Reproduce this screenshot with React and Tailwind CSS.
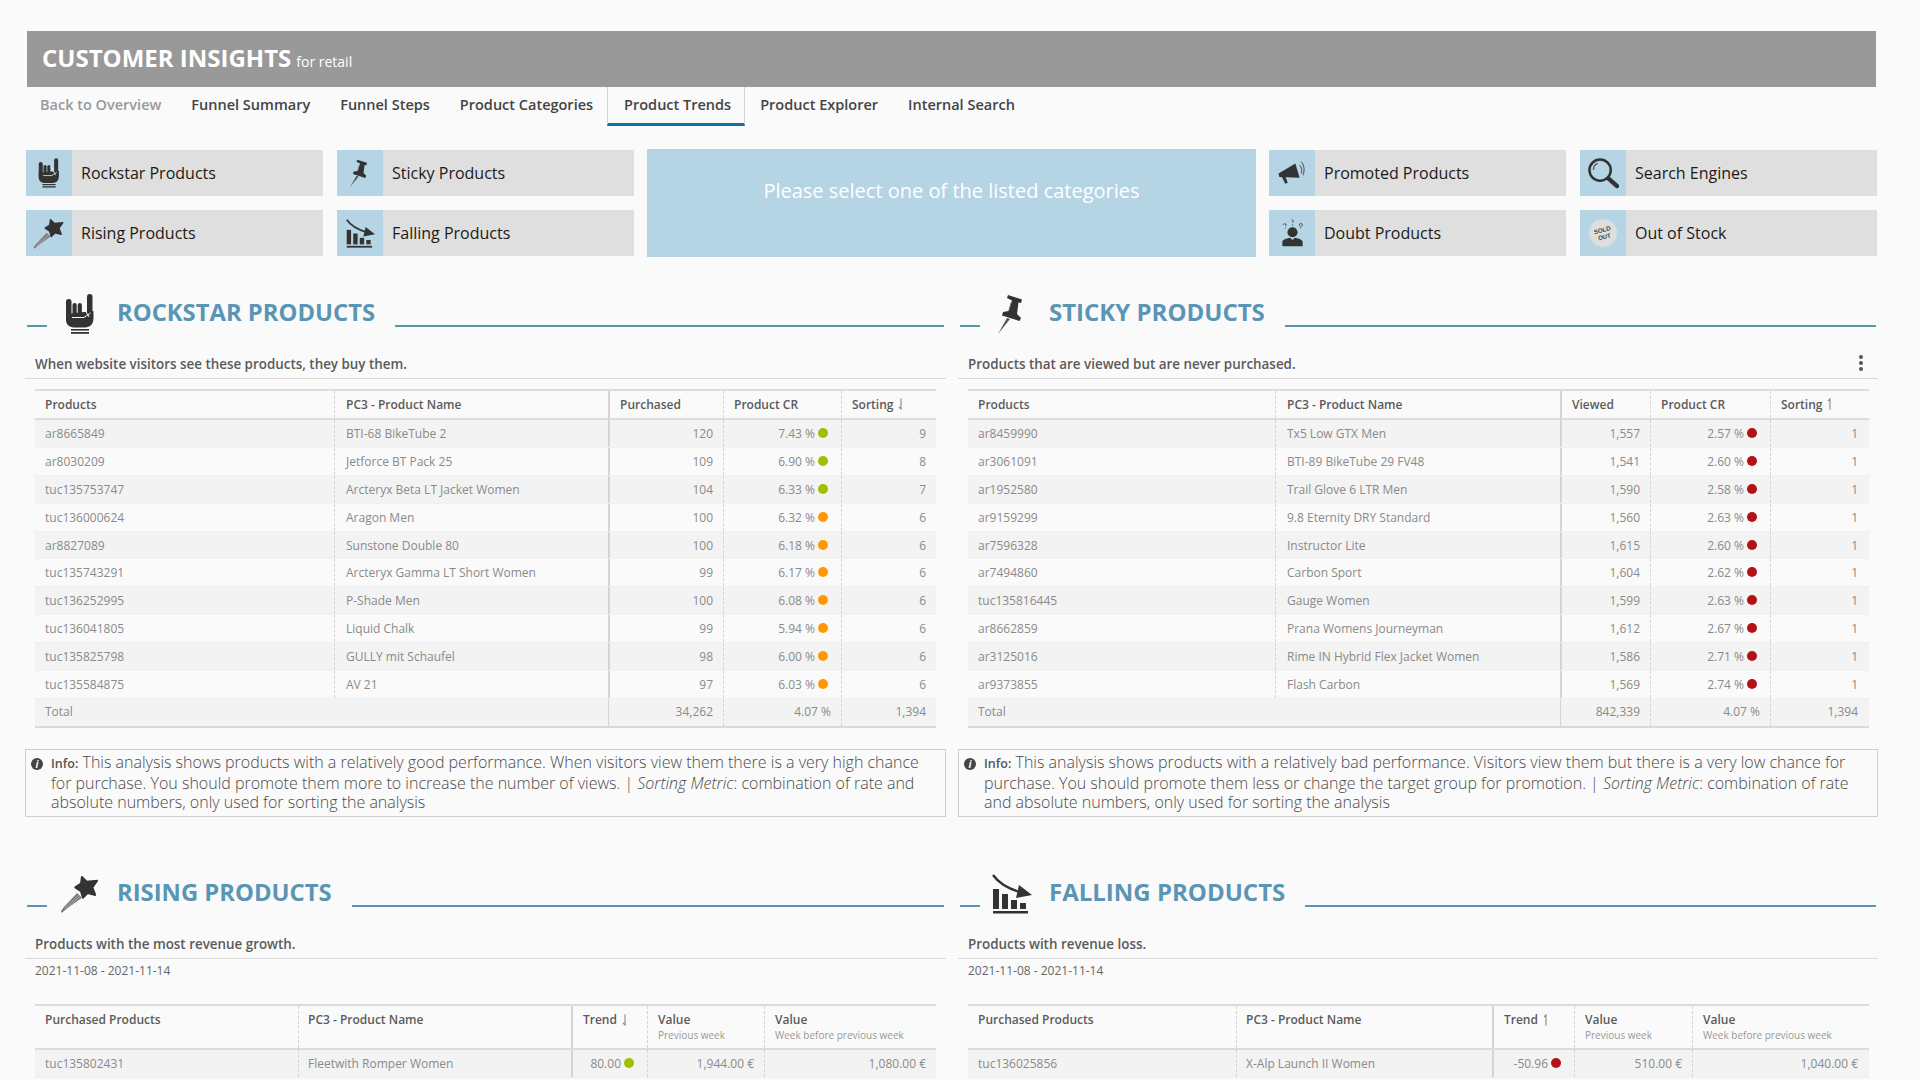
import React from 'react'

const font = { fontFamily: '"Open Sans", sans-serif' }

const RockIcon = ({ className }) => (
  <svg viewBox="0 0 30 40" className={className} fill="#333">
    <rect x="1" y="5" width="5.5" height="22" rx="2.7" />
    <rect x="22" y="0" width="5.5" height="26" rx="2.7" />
    <rect x="7.5" y="9" width="4.2" height="16" rx="2.1" />
    <rect x="12.7" y="9" width="4.2" height="16" rx="2.1" />
    <path d="M1 20 L28.5 17 L28.5 24 C28.5 30 25 33.5 20 33.5 L10 33.5 C5 33.5 1 31 1 26 Z" />
    <path d="M7 23.5 L19 23.5 L25.5 19 M17.5 11 L24 23" stroke="#fafafa" strokeWidth="1" fill="none" />
    <rect x="6" y="35" width="18" height="1.6" />
    <rect x="6" y="38" width="18" height="1.8" />
  </svg>
)

const PinIcon = ({ className }) => (
  <svg viewBox="0 0 30 40" className={className}>
    <path d="M11 1 L25 5.5 L24 9 L21.5 8.5 L20 20 L24 24 L22.5 27 L5 21.5 L6 18 L11.5 17 L15 6.5 L10 4 Z" fill="#333" />
    <path d="M10 24 L13 25 L1 40 Z" fill="#555" />
    <path d="M14 9 L12 16" stroke="#777" strokeWidth="1" />
  </svg>
)

const WandIcon = ({ className }) => (
  <svg viewBox="0 0 42 40" className={className}>
    <path d="M23 2 L28 7 L39 6 L34 13 L37 21 L29 19 L24 24 L22 17 L16 13 L22 9 Z" fill="#333" stroke="#333" strokeWidth="2" strokeLinejoin="round" />
    <path d="M18 19 L23 24 L5 37 L2 40 L1 38 L4 34 Z" fill="#777" />
    <path d="M19.5 21 L5 35.5 M21 22.5 L6 36.5" stroke="#ccc" strokeWidth="0.7" />
  </svg>
)

const FallingIcon = ({ className }) => (
  <svg viewBox="0 0 40 40" className={className}>
    <path d="M1 1 C6 8 14 14 28 18" stroke="#333" strokeWidth="2.4" fill="none" />
    <path d="M27 11 L40 21 L24 24 Z" fill="#333" />
    <rect x="1" y="15" width="6" height="20" fill="#333" />
    <rect x="10" y="20" width="6" height="15" fill="#333" />
    <rect x="19" y="26" width="6" height="9" fill="#333" />
    <rect x="28" y="29" width="6" height="6" fill="#333" />
    <rect x="1" y="37" width="35" height="2.5" fill="#333" />
  </svg>
)

const MegaphoneIcon = ({ className }) => (
  <svg viewBox="0 0 32 32" className={className}>
    <path d="M20 4 L25 21 L1 20 L0 16 Z" fill="#333" />
    <path d="M4 20 L8 19 L11 27 L8 28 Z" fill="#333" />
    <path d="M25 6 C28 9 28 13 27 16 M27 2 C31 7 31 13 29 18" stroke="#333" strokeWidth="1" fill="none" />
  </svg>
)

const SearchIcon = ({ className }) => (
  <svg viewBox="0 0 32 32" className={className}>
    <circle cx="12.5" cy="12.5" r="11" fill="none" stroke="#333" strokeWidth="2.6" />
    <path d="M5.5 12 C5.5 8.5 8 6 10 5.5" fill="none" stroke="#555" strokeWidth="1.4" />
    <path d="M21 21 L30 29" stroke="#333" strokeWidth="4.4" strokeLinecap="round" />
  </svg>
)

const DoubtIcon = ({ className }) => (
  <svg viewBox="0 0 32 36" className={className}>
    <circle cx="16" cy="17" r="6.5" fill="#333" />
    <path d="M3 35 L3 29 C5 25 10 25 13 24 L16 27 L19 24 C22 25 27 25 29 29 L29 35 Z" fill="#333" />
    <path d="M15 1.5 C18 1 18 4 15.5 4.5 M16 7 L16 8.5 M4 7.5 C5 5 9 6 7 9 M7 11 L7 12 M25 9 C24 5 29 5 28.5 8 C28 10 26 10 26 12" stroke="#333" strokeWidth="1.1" fill="none" />
  </svg>
)

const burst = Array.from({ length: 48 }, (_, i) => {
  const r = i % 2 ? 15.8 : 14.2
  const a = (i / 48) * Math.PI * 2
  return `${16 + r * Math.cos(a)},${16 + r * Math.sin(a)}`
}).join(' ')

const SoldOutIcon = ({ className }) => (
  <svg viewBox="0 0 32 32" className={className}>
    <polygon points={burst} fill="#dedede" />
    <g transform="rotate(-14 16 16)" fill="#444" fontFamily="Liberation Sans, sans-serif" fontWeight="700" fontSize="6.5" textAnchor="middle">
      <text x="16" y="15">SOLD</text>
      <text x="16.5" y="22.5">OUT</text>
    </g>
  </svg>
)

const CategoryButton = ({ icon: Icon, iconClass, label }) => (
  <div className="flex h-[46px] w-[297px] bg-[#e0dfdf]">
    <div className="flex w-[46px] shrink-0 items-center justify-center bg-[#b5d4e4]">
      <Icon className={iconClass} />
    </div>
    <span className="ml-[9px] self-center text-[16px] text-[#1a1a1a]">{label}</span>
  </div>
)

const Dot = ({ color }) => <span className={`ml-[3px] inline-block h-[10px] w-[10px] -translate-y-[1px] rounded-full ${color}`} />

const green = 'bg-[#9dc000]'
const orange = 'bg-[#ff9800]'
const red = 'bg-[#b31217]'

const SortArrow = ({ up }) => (
  <svg viewBox="0 0 8 12" className="ml-[4px] inline-block h-[12px] w-[8px] -translate-y-[1px]" fill="none" stroke="#888" strokeWidth="1.1">
    {up ? <path d="M4 11.5 L4 1 L2 3" /> : <path d="M4 .5 L4 11 L2 9" />}
  </svg>
)

const dashed = 'border-l border-dashed border-[#d4d4d4]'
const solid = 'border-l-2 border-[#d4d4d4]'

const Row = ({ cols, cells, striped, dots, trend, height = 'h-[27.9px]' }) => (
  <div className={`grid ${cols} ${height} items-stretch border-b border-[#f0f0f0] text-[12px] text-[#8a8a8a] ${striped ? 'bg-[#f3f3f3]' : ''}`}>
    <div className="flex items-center pt-[1px] pl-[10px]">{cells[0]}</div>
    <div className={`flex items-center pt-[1px] ${trend ? 'pl-[9px]' : 'pl-[11px]'} ${dashed}`}>{cells[1]}</div>
    <div className={`flex items-center justify-end pt-[1px] ${trend ? 'pr-[13px]' : 'pr-[10px]'} ${solid}`}>{cells[2]}</div>
    <div className={`flex items-center justify-end pt-[1px] ${dots ? 'pr-[13px]' : 'pr-[10px]'} ${dashed}`}>{cells[3]}</div>
    <div className={`flex items-center justify-end pt-[1px] pr-[10px] ${dashed}`}>{cells[4]}</div>
  </div>
)

const TotalRow = ({ cols, cells }) => (
  <div className={`grid ${cols} h-[29px] items-stretch border-b-2 border-[#d9d9d9] bg-[#f3f3f3] text-[12px] text-[#8a8a8a]`}>
    <div className="col-span-2 flex items-center pl-[10px]">Total</div>
    <div className="flex items-center justify-end border-l border-[#d4d4d4] pr-[10px]">{cells[0]}</div>
    <div className={`flex items-center justify-end pr-[10px] ${dashed}`}>{cells[1]}</div>
    <div className={`flex items-center justify-end pr-[10px] ${dashed}`}>{cells[2]}</div>
  </div>
)

const HeaderRow = ({ cols, heads, height, tall }) => (
  <div className={`grid ${cols} ${height} border-t-2 border-b-2 border-[#dcdcdc] text-[12px] font-semibold text-[#5a5a5a]`}>
    {heads.map((head, i) => (
      <div
        key={i}
        className={`${tall ? 'pt-[5px]' : 'flex items-center'} ${i === 0 ? 'pl-[10px]' : i === 1 ? `${tall ? 'pl-[9px]' : 'pl-[11px]'} ${dashed}` : i === 2 ? `pl-[10px] ${solid}` : `pl-[10px] ${dashed}`}`}
      >
        <div>
          {head.label}
          {head.sort && <SortArrow up={head.sort === 'up'} />}
        </div>
        {head.sub && <div className="-mt-[1px] text-[10px] font-normal text-[#999]">{head.sub}</div>}
      </div>
    ))}
  </div>
)

const SectionTitle = ({ icon: Icon, iconClass, iconWrap, title, size = 'text-[23.8px]' }) => (
  <div className="flex h-[40px] items-end pl-[2px]">
    <div className="mb-[7px] h-[2px] w-[20px] shrink-0 bg-[#5b95b5]" />
    <div className={iconWrap}>
      <Icon className={iconClass} />
    </div>
    <h2 className={`mb-[6px] ${size} leading-[32px] font-bold whitespace-nowrap text-[#5b95b5]`}>{title}</h2>
    <div className="mr-[2px] mb-[7px] ml-[20px] h-[2px] flex-1 bg-[#5b95b5]" />
  </div>
)

const Description = ({ children, menu }) => (
  <div className="flex h-[45px] items-center justify-between border-b border-[#d9d9d9] pt-[16px] pl-[10px] text-[13.4px] font-semibold text-[#5a5a5a]">
    <span>{children}</span>
    {menu && (
      <span className="mr-[15px] flex -translate-y-[1px] flex-col gap-[2px]">
        <i className="h-[4px] w-[4px] rounded-full bg-[#555]" />
        <i className="h-[4px] w-[4px] rounded-full bg-[#555]" />
        <i className="h-[4px] w-[4px] rounded-full bg-[#555]" />
      </span>
    )}
  </div>
)

const Info = ({ children }) => (
  <div className="relative mt-[21px] h-[68px] border border-[#cfcfcf] pt-[3px] pr-[24px] pl-[25px] text-[16px] leading-[19.6px] font-light text-[#4a4a4a]">
    <span className="absolute top-[8px] left-[5px] flex h-[12px] w-[12px] items-center justify-center rounded-full bg-[#444] text-[10px] leading-none font-bold text-[#fafafa] italic">i</span>
    <span className="text-[12.5px] font-semibold text-[#555]">Info:</span>{' '}
    {children}
  </div>
)

const rockstarRows = [
  ['ar8665849', 'BTI-68 BikeTube 2', '120', '7.43 %', green, '9'],
  ['ar8030209', 'Jetforce BT Pack 25', '109', '6.90 %', green, '8'],
  ['tuc135753747', 'Arcteryx Beta LT Jacket Women', '104', '6.33 %', green, '7'],
  ['tuc136000624', 'Aragon Men', '100', '6.32 %', orange, '6'],
  ['ar8827089', 'Sunstone Double 80', '100', '6.18 %', orange, '6'],
  ['tuc135743291', 'Arcteryx Gamma LT Short Women', '99', '6.17 %', orange, '6'],
  ['tuc136252995', 'P-Shade Men', '100', '6.08 %', orange, '6'],
  ['tuc136041805', 'Liquid Chalk', '99', '5.94 %', orange, '6'],
  ['tuc135825798', 'GULLY mit Schaufel', '98', '6.00 %', orange, '6'],
  ['tuc135584875', 'AV 21', '97', '6.03 %', orange, '6'],
]

const stickyRows = [
  ['ar8459990', 'Tx5 Low GTX Men', '1,557', '2.57 %', red, '1'],
  ['ar3061091', 'BTI-89 BikeTube 29 FV48', '1,541', '2.60 %', red, '1'],
  ['ar1952580', 'Trail Glove 6 LTR Men', '1,590', '2.58 %', red, '1'],
  ['ar9159299', '9.8 Eternity DRY Standard', '1,560', '2.63 %', red, '1'],
  ['ar7596328', 'Instructor Lite', '1,615', '2.60 %', red, '1'],
  ['ar7494860', 'Carbon Sport', '1,604', '2.62 %', red, '1'],
  ['tuc135816445', 'Gauge Women', '1,599', '2.63 %', red, '1'],
  ['ar8662859', 'Prana Womens Journeyman', '1,612', '2.67 %', red, '1'],
  ['ar3125016', 'Rime IN Hybrid Flex Jacket Women', '1,586', '2.71 %', red, '1'],
  ['ar9373855', 'Flash Carbon', '1,569', '2.74 %', red, '1'],
]

const ProductTable = ({ cols, heads, rows, total }) => (
  <div className="mt-[10px] ml-[10px] w-[901px]">
    <HeaderRow cols={cols} heads={heads} height="h-[31px]" />
    {rows.map((row, i) => (
      <Row
        key={row[0]}
        cols={cols}
        striped={i % 2 === 0}
        dots
        cells={[row[0], row[1], row[2], <>{row[3]}<Dot color={row[4]} /></>, row[5]]}
      />
    ))}
    <TotalRow cols={cols} cells={total} />
  </div>
)

const TrendTable = ({ cols, sort, row }) => (
  <div className="ml-[10px] w-[901px]">
    <HeaderRow
      cols={cols}
      tall
      height="h-[46px]"
      heads={[
        { label: 'Purchased Products' },
        { label: 'PC3 - Product Name' },
        { label: 'Trend', sort },
        { label: 'Value', sub: 'Previous week' },
        { label: 'Value', sub: 'Week before previous week' },
      ]}
    />
    <Row
      cols={cols}
      striped
      trend
      height="h-[28px]"
      cells={[row[0], row[1], <>{row[2]}<Dot color={row[3]} /></>, row[4], row[5]]}
    />
  </div>
)

const DateRange = () => <div className="h-[45px] pt-[4px] pl-[10px] text-[12px] leading-[16px] text-[#666]">2021-11-08 - 2021-11-14</div>

const navItems = ['Funnel Summary', 'Funnel Steps', 'Product Categories']
const navAfter = ['Product Explorer', 'Internal Search']

export default function App() {
  return (
    <div className="h-screen overflow-hidden bg-[#fafafa] pt-[31px]" style={font}>
      <div className="ml-[27px] flex h-[56px] w-[1849px] items-center bg-[#999999] pb-[2px] pl-[15px] text-white">
        <span className="text-[24px] font-bold">CUSTOMER INSIGHTS</span>
        <span className="mt-[7px] ml-[5px] text-[14px]">for retail</span>
      </div>

      <nav className="ml-[25px] flex h-[39px] items-stretch text-[14.5px] font-semibold text-[#444]">
        <div className="flex items-center border-b-[3px] border-transparent px-[15px] text-[#999]">Back to Overview</div>
        {navItems.map((item) => (
          <div key={item} className="flex items-center border-b-[3px] border-transparent px-[15px]">{item}</div>
        ))}
        <div className="-ml-[1px] flex items-center border-x border-b-[3px] border-x-[#d4d4d4] border-b-[#0b72ad] pr-[13px] pl-[16px]">Product Trends</div>
        {navAfter.map((item) => (
          <div key={item} className="flex items-center border-b-[3px] border-transparent px-[15px]">{item}</div>
        ))}
      </nav>

      <div className="mt-[23px] ml-[26px] flex h-[108px] items-center">
        <div className="grid grid-cols-[297px_297px] gap-x-[14px] gap-y-[14px]">
          <CategoryButton icon={RockIcon} iconClass="h-[30px] w-[22px]" label="Rockstar Products" />
          <CategoryButton icon={PinIcon} iconClass="h-[28px] w-[22px]" label="Sticky Products" />
          <CategoryButton icon={WandIcon} iconClass="h-[31px] w-[32px]" label="Rising Products" />
          <CategoryButton icon={FallingIcon} iconClass="h-[29px] w-[29px]" label="Falling Products" />
        </div>
        <div className="mx-[13px] flex h-[108px] w-[609px] justify-center bg-[#b5d4e4] pt-[27px] text-[20px] text-white">
          Please select one of the listed categories
        </div>
        <div className="grid grid-cols-[297px_297px] gap-x-[14px] gap-y-[14px]">
          <CategoryButton icon={MegaphoneIcon} iconClass="h-[27px] w-[28px]" label="Promoted Products" />
          <CategoryButton icon={SearchIcon} iconClass="h-[31px] w-[31px]" label="Search Engines" />
          <CategoryButton icon={DoubtIcon} iconClass="h-[30px] w-[25px]" label="Doubt Products" />
          <CategoryButton icon={SoldOutIcon} iconClass="h-[30px] w-[30px]" label="Out of Stock" />
        </div>
      </div>

      <div className="mt-[37px] ml-[25px] grid grid-cols-[921px_920px] gap-x-[12px]">
        <section>
          <SectionTitle icon={RockIcon} iconWrap="mr-[22px] ml-[18px] w-[30px]" iconClass="h-[40px] w-[30px]" title="ROCKSTAR PRODUCTS" />
          <Description>When website visitors see these products, they buy them.</Description>
          <ProductTable
            cols="grid-cols-[299px_274px_115px_118px_95px]"
            heads={[
              { label: 'Products' },
              { label: 'PC3 - Product Name' },
              { label: 'Purchased' },
              { label: 'Product CR' },
              { label: 'Sorting', sort: 'down' },
            ]}
            rows={rockstarRows}
            total={['34,262', '4.07 %', '1,394']}
          />
          <Info>
            This analysis shows products with a relatively good performance. When visitors view them there is a very high chance for purchase. You should promote them more to increase the number of views. | <em>Sorting Metric</em>: combination of rate and absolute numbers, only used for sorting the analysis
          </Info>
        </section>

        <section>
          <SectionTitle icon={PinIcon} size="text-[24px]" iconWrap="mr-[22px] ml-[17px] w-[30px]" iconClass="h-[40px] w-[30px]" title="STICKY PRODUCTS" />
          <Description menu>Products that are viewed but are never purchased.</Description>
          <ProductTable
            cols="grid-cols-[307px_285px_90px_120px_98px]"
            heads={[
              { label: 'Products' },
              { label: 'PC3 - Product Name' },
              { label: 'Viewed' },
              { label: 'Product CR' },
              { label: 'Sorting', sort: 'up' },
            ]}
            rows={stickyRows}
            total={['842,339', '4.07 %', '1,394']}
          />
          <Info>
            This analysis shows products with a relatively bad performance. Visitors view them but there is a very low chance for purchase. You should promote them less or change the target group for promotion. | <em>Sorting Metric</em>: combination of rate and absolute numbers, only used for sorting the analysis
          </Info>
        </section>

        <section className="mt-[57px]">
          <SectionTitle icon={WandIcon} iconWrap="mr-[17px] ml-[13px] w-[40px]" iconClass="h-[40px] w-[40px]" title="RISING PRODUCTS" />
          <Description>Products with the most revenue growth.</Description>
          <DateRange />
          <TrendTable
            cols="grid-cols-[263px_273px_76px_117px_172px]"
            sort="down"
            row={['tuc135802431', 'Fleetwith Romper Women', '80.00', green, '1,944.00 €', '1,080.00 €']}
          />
        </section>

        <section className="mt-[57px]">
          <SectionTitle icon={FallingIcon} size="text-[24px]" iconWrap="mr-[17px] ml-[12px] w-[40px]" iconClass="h-[40px] w-[40px]" title="FALLING PRODUCTS" />
          <Description>Products with revenue loss.</Description>
          <DateRange />
          <TrendTable
            cols="grid-cols-[268px_256px_82px_118px_176px]"
            sort="up"
            row={['tuc136025856', 'X-Alp Launch II Women', '-50.96', red, '510.00 €', '1,040.00 €']}
          />
        </section>
      </div>
    </div>
  )
}
